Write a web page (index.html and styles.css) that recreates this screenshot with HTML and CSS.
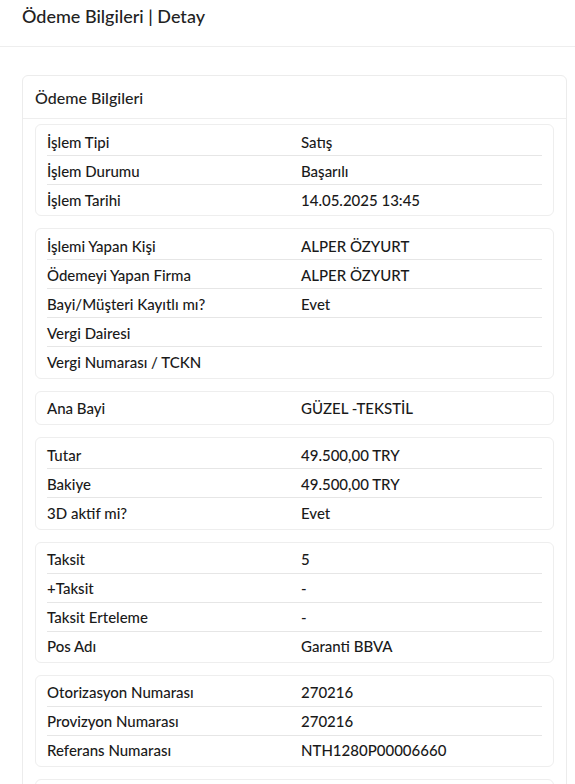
FILE: index.html
```html
<!DOCTYPE html>
<html lang="tr">
<head>
<meta charset="utf-8">
<title>Ödeme Bilgileri | Detay</title>
<link rel="stylesheet" href="styles.css">
</head>
<body>
<header class="page-header">
  <h1 class="page-title">Ödeme Bilgileri | Detay</h1>
</header>
<main class="page-body">
  <section class="card">
    <div class="card-header">Ödeme Bilgileri</div>
    <div class="card-body">
      <div class="group">
        <div class="row"><span class="label">İşlem Tipi</span><span class="value">Satış</span></div>
        <div class="row"><span class="label">İşlem Durumu</span><span class="value">Başarılı</span></div>
        <div class="row"><span class="label">İşlem Tarihi</span><span class="value">14.05.2025 13:45</span></div>
      </div>
      <div class="group">
        <div class="row"><span class="label">İşlemi Yapan Kişi</span><span class="value">ALPER ÖZYURT</span></div>
        <div class="row"><span class="label">Ödemeyi Yapan Firma</span><span class="value">ALPER ÖZYURT</span></div>
        <div class="row"><span class="label">Bayi/Müşteri Kayıtlı mı?</span><span class="value">Evet</span></div>
        <div class="row"><span class="label">Vergi Dairesi</span><span class="value"></span></div>
        <div class="row"><span class="label">Vergi Numarası / TCKN</span><span class="value"></span></div>
      </div>
      <div class="group">
        <div class="row"><span class="label">Ana Bayi</span><span class="value">GÜZEL -TEKSTİL</span></div>
      </div>
      <div class="group">
        <div class="row"><span class="label">Tutar</span><span class="value">49.500,00 TRY</span></div>
        <div class="row"><span class="label">Bakiye</span><span class="value">49.500,00 TRY</span></div>
        <div class="row"><span class="label">3D aktif mi?</span><span class="value">Evet</span></div>
      </div>
      <div class="group">
        <div class="row"><span class="label">Taksit</span><span class="value">5</span></div>
        <div class="row"><span class="label">+Taksit</span><span class="value">-</span></div>
        <div class="row"><span class="label">Taksit Erteleme</span><span class="value">-</span></div>
        <div class="row"><span class="label">Pos Adı</span><span class="value">Garanti BBVA</span></div>
      </div>
      <div class="group">
        <div class="row"><span class="label">Otorizasyon Numarası</span><span class="value">270216</span></div>
        <div class="row"><span class="label">Provizyon Numarası</span><span class="value">270216</span></div>
        <div class="row"><span class="label">Referans Numarası</span><span class="value">NTH1280P00006660</span></div>
      </div>
      <div class="group group-empty"></div>
    </div>
  </section>
</main>
</body>
</html>
```
FILE: styles.css
```css
* { box-sizing: border-box; }
html, body { margin: 0; padding: 0; }
body {
  background: #ffffff;
  color: #1a1a1a;
  font-family: "Lato", "Liberation Sans", sans-serif;
  font-size: 15px;
  font-weight: 500;
}
.page-header {
  height: 47px;
  border-bottom: 1px solid #eeeeee;
  padding: 0 22px;
  display: flex;
  align-items: center;
}
.page-title {
  margin: 0;
  font-size: 18px;
  font-weight: 500;
  color: #222;
  line-height: 1;
  padding-bottom: 14px;
}
.page-body {
  padding: 28px 8px 0 22px;
}
.card {
  border: 1px solid #ececec;
  border-radius: 6px;
  background: #fff;
}
.card-header {
  height: 43px;
  padding: 0 12px;
  display: flex;
  align-items: center;
  font-size: 16px;
  color: #222;
  border-bottom: 1px solid #eeeeee;
}
.card-body {
  padding: 5px 12px 12px;
  display: flex;
  flex-direction: column;
  gap: 12px;
}
.group {
  border: 1px solid #eeeeee;
  border-radius: 6px;
  padding: 2px 11px 2.4px;
}
.group-empty { height: 60px; }
.row {
  display: grid;
  grid-template-columns: 254px 1fr;
  height: 29px;
  align-items: center;
  border-bottom: 1px solid #e6e6e6;
  padding-top: 1px;
}
.row:last-child { border-bottom: none; height: 28px; }
.label, .value { white-space: nowrap; }
```
